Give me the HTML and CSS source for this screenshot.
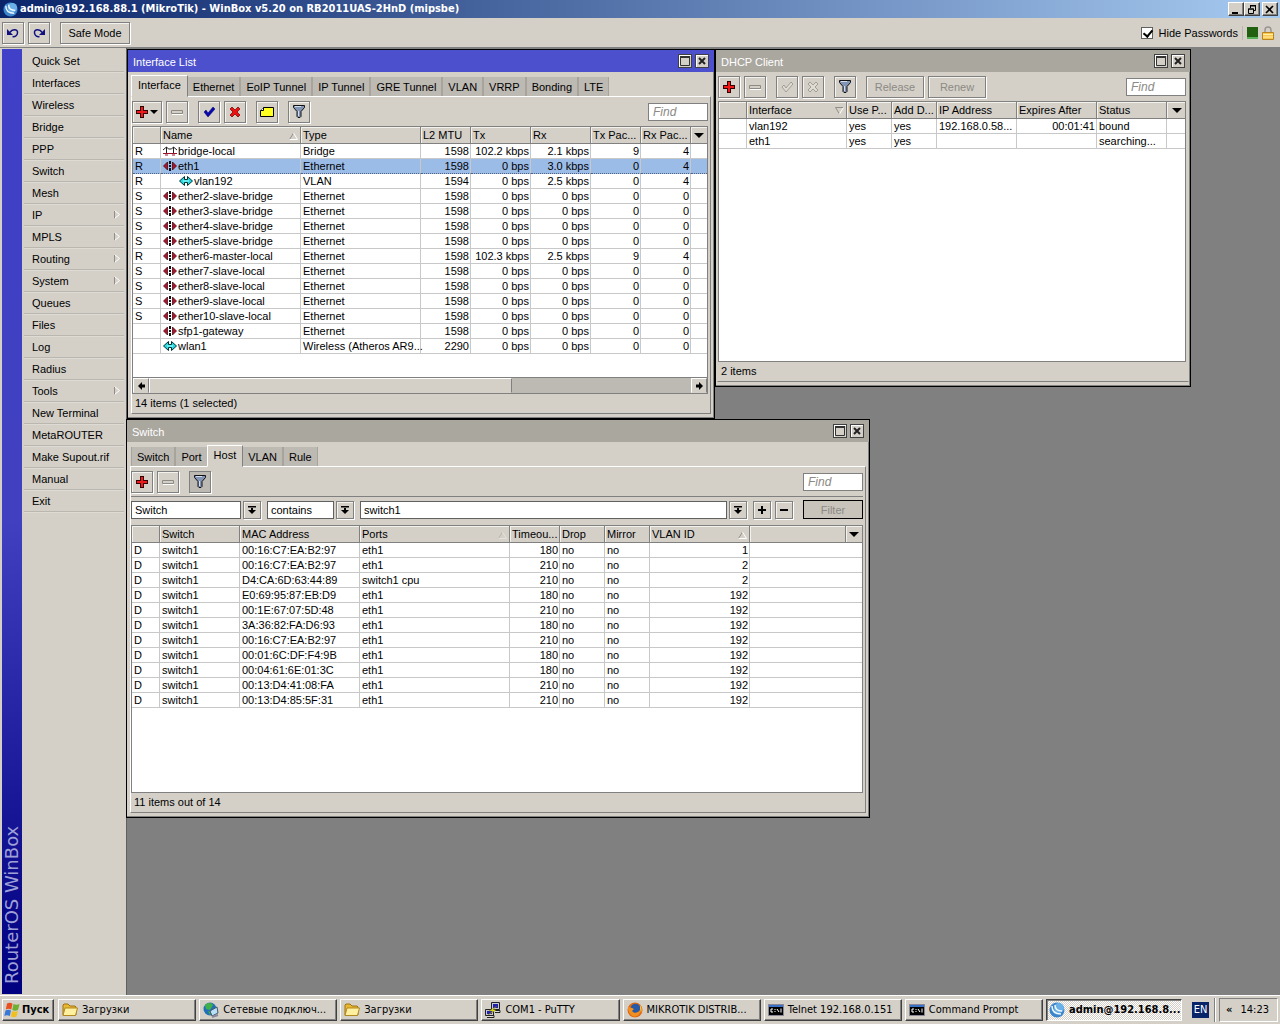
FILE: index.html
```html
<!DOCTYPE html>
<html lang="en">
<head>
  <meta charset="UTF-8">
  <meta name="viewport" content="width=device-width, initial-scale=1.0">
  <title>admin@192.168.88.1 (MikroTik) - WinBox v5.20</title>
  <link rel="stylesheet" href="styles.css">
</head>
<body>
  <svg class="sprite" width="0" height="0">
    <symbol id="plus" viewBox="0 0 12 12"><path d="M4 0h4v4h4v4H8v4H4V8H0V4h4z" fill="#300"/><path d="M5 1h2v4h4v2H7v4H5V7H1V5h4z" fill="#f01818"/></symbol>
    <symbol id="minus-off" viewBox="0 0 12 12"><path d="M.5 4.500h11v3H.5z" fill="#d4d0c8" stroke="#8c8a84"/><path d="M1 8.500h11.500" stroke="#fff"/></symbol>
    <symbol id="check" viewBox="0 0 12 12"><path d="M1 6l2-2 2 3 5-6 2 2-7 8z" fill="#0808b0" stroke="#000060" stroke-width=".5"/></symbol>
    <symbol id="cross" viewBox="0 0 12 12"><path d="M3 1l3 3 3-3 2 2-3 3 3 3-2 2-3-3-3 3-2-2 3-3-3-3z" fill="#f01010" stroke="#600" stroke-width=".7"/></symbol>
    <symbol id="check-off" viewBox="0 0 12 12"><path d="M1 6l2-2 2 3 5-6 2 2-7 8z" fill="#dedbd3" stroke="#929088" stroke-width=".8"/></symbol>
    <symbol id="cross-off" viewBox="0 0 12 12"><path d="M3 1l3 3 3-3 2 2-3 3 3 3-2 2-3-3-3 3-2-2 3-3-3-3z" fill="#dedbd3" stroke="#929088" stroke-width=".8"/></symbol>
    <symbol id="note" viewBox="0 0 14 12"><path d="M3.500 1.500h10v9H.5v-6z" fill="#ffff20" stroke="#000"/><path d="M3.500 1.500v3h-3" fill="#fff" stroke="#000"/></symbol>
    <symbol id="funnel" viewBox="0 0 12 13"><path d="M.5.5h11v2L8 6.500v5l-1 1H5l-1-1v-5L.5 2.500z" fill="#8294b4" stroke="#111"/><path d="M2 1.500h6M5.500 6v5" stroke="#d4def0"/></symbol>
    <symbol id="undo" viewBox="0 0 12 10"><path d="M3 4.500C5 1 11 .5 10.500 5c-.3 3-3 4-5 3.500" fill="none" stroke="#101080" stroke-width="1.500"/><path d="M0 1v6h6z" fill="#101080"/></symbol>
    <symbol id="redo" viewBox="0 0 12 10"><path d="M9 4.500C7 1 1 .5 1.500 5c.3 3 3 4 5 3.500" fill="none" stroke="#101080" stroke-width="1.500"/><path d="M12 1v6H6z" fill="#101080"/></symbol>
    <symbol id="eth" viewBox="0 0 14 10"><path d="M.5 5L4.500 1v8zM13.500 5l-4-4v8z" fill="#b01030" stroke="#300" stroke-width=".7"/><path d="M7 0v3M7 4v2M7 7v3" stroke="#111" stroke-width="2"/></symbol>
    <symbol id="vlan" viewBox="0 0 14 10"><path d="M.5 5L5.500.5v3h3v-3l5 4.500-5 4.500v-3h-3v3z" fill="#28d8e0" stroke="#033"/><path d="M4 5h6" stroke="#a0ffff"/></symbol>
    <symbol id="bridge" viewBox="0 0 14 10"><path d="M0 4l3.500-3 2 2h3l2-2L14 4M3.500 1v7M10.500 1v7" fill="none" stroke="#222"/><path d="M0 7.500h14M2 9h3M9 9h3" stroke="#a01028"/></symbol>
    <symbol id="up" viewBox="0 0 9 8"><path d="M4.500 1L.5 7.500" stroke="#908e88"/><path d="M4.500 1l4 6.500H.5" fill="none" stroke="#fff"/></symbol>
    <symbol id="down" viewBox="0 0 9 8"><path d="M8.500.5h-8l4 6.500" fill="none" stroke="#908e88"/><path d="M4.500 7l4-6.500" stroke="#fff"/></symbol>
    <symbol id="tri" viewBox="0 0 10 5"><path d="M0 0h10L5 5z"/></symbol>
    <symbol id="drop" viewBox="0 0 8 8"><path d="M0 0h8v1.500H0zM3 2h2v2h3L4 8 0 4h3z"/></symbol>
    <symbol id="sub" viewBox="0 0 6 9"><path d="M.5 9V.5" stroke="#908e88"/><path d="M.5.5l5 4-5 4" fill="none" stroke="#fff"/></symbol>
    <symbol id="left" viewBox="0 0 7 8"><path d="M0 4l4-4v2.500h3v3H4V8z"/></symbol>
    <symbol id="right" viewBox="0 0 7 8"><path d="M7 4L3 0v2.500H0v3h3V8z"/></symbol>
    <symbol id="max" viewBox="0 0 10 10"><path d="M.5 1h9v8.500h-9z" fill="none" stroke="#333"/><path d="M0 1h10" stroke="#333" stroke-width="2"/></symbol>
    <symbol id="close" viewBox="0 0 10 10"><path d="M2 2l6 6M8 2L2 8" stroke="#222" stroke-width="2"/></symbol>
    <symbol id="winbox" viewBox="0 0 16 16"><circle cx="8" cy="8" r="7.500" fill="#3d86cc"/><circle cx="10" cy="6" r="5" fill="#6cb0e8"/><path d="M3 4c0 5 3 8 9 8M6 3c0 4 2 6 7 6" fill="none" stroke="#eef8ff" stroke-width="1.500"/></symbol>
    <symbol id="folder" viewBox="0 0 16 16"><path d="M1 13V3l1-1h4l2 2h5l1 1v8z" fill="#e8b830" stroke="#a07010"/><path d="M1 13.500L3 6h12.500l-2 7.500z" fill="#fff0a0" stroke="#b08820"/></symbol>
    <symbol id="cmd" viewBox="0 0 16 16"><path d="M.5 2.500h15v11H.5z" fill="#000" stroke="#889"/><path d="M1 3h14v2H1z" fill="#3a6fc8"/><path d="M5 7H3v3h2M7 7v1M7 9v1M9 7l2 3M13 6.500v4" fill="none" stroke="#fff"/></symbol>
    <symbol id="fox" viewBox="0 0 16 16"><circle cx="8" cy="8" r="7.500" fill="#e06810"/><circle cx="8.500" cy="6.500" r="4.800" fill="#2858a8"/><path d="M1 5c2 0 4 1 6 2l-2 2c2 3 6 2 8-1 1 4-3 7-6 6.500S1 10 1 5z" fill="#f09020"/><path d="M13 3c2 3 2 5 1 8l-1-4z" fill="#f8c040"/></symbol>
    <symbol id="putty" viewBox="0 0 16 16"><path d="M6.500.5h8v7h-8zM.5 7.500h8v6h-8z" fill="#c8c8d0" stroke="#222"/><path d="M8 2h5v4H8zM2 9h5v3H2z" fill="#2020b0"/><path d="M2 15.500h7v-2H2M10 8.500h5v2h-5" fill="#ddd" stroke="#222"/><path d="M12 4L4 9l4 0-5 4 8-5-3-.5z" fill="#f8f020" stroke="#660" stroke-width=".4"/></symbol>
    <symbol id="net" viewBox="0 0 16 16"><circle cx="7" cy="7" r="6.500" fill="#2070b8"/><path d="M2 3c3-3 7-2 8 0L7 8 3 7zM5 9l4 1-2 3z" fill="#40b048"/><path d="M7 9l7-4 1 6-6 3z" fill="#b8e0f8" stroke="#456"/><path d="M9 15l6-2" stroke="#889" stroke-width="2"/></symbol>
    <symbol id="flag" viewBox="0 0 16 16"><path d="M3 1.500c2-1 4-.8 5.500.2L7.300 7.500c-2-1-4-1-5.500 0z" fill="#e85020"/><path d="M9.500 2c2 1 4 1 6 0L14 8c-2 1-4 1-5.700 0z" fill="#70b030"/><path d="M1.500 8.500c2-1.200 4-1 5.500 0L5.800 14c-2-1-4-1-5.500 0z" fill="#3878d8"/><path d="M8 9c2 1 4 1 5.800 0l-1.200 5.500c-2 1-4 1-5.700 0z" fill="#f0c020"/></symbol>
    <symbol id="lock" viewBox="0 0 12 14"><path d="M3 7V4c0-4 6-4 6 0v3" fill="none" stroke="#999690" stroke-width="1.500"/><path d="M.5 6.500h11v7H.5z" fill="#f8c850" stroke="#b88420"/><path d="M1 8.500h10M1 11h10" stroke="#fff0a8"/></symbol>
  </svg>

  <header class="titlebar">
    <svg width="15" height="15"><use href="#winbox"/></svg>
    <span class="title">admin@192.168.88.1 (MikroTik) - WinBox v5.20 on RB2011UAS-2HnD (mipsbe)</span>
    <button class="sys" aria-label="Minimize"><svg width="10" height="9" viewBox="0 0 10 9"><path d="M1 7h6v2H1z"/></svg></button>
    <button class="sys" aria-label="Restore"><svg width="10" height="9" viewBox="0 0 10 9"><path d="M3.500 3V1h5v4.500H7M3 .5h6M1.500 4h5v4.500h-5zM1 4h6" fill="none" stroke="#000"/></svg></button>
    <button class="sys sys-close" aria-label="Close"><svg width="10" height="9" viewBox="0 0 10 9"><path d="M1 1l7 7M8 1L1 8" stroke="#000" stroke-width="1.600"/></svg></button>
  </header>

  <div class="topbar">
    <button class="btn" aria-label="Undo"><svg width="12" height="10"><use href="#undo"/></svg></button>
    <button class="btn" aria-label="Redo"><svg width="12" height="10"><use href="#redo"/></svg></button>
    <button class="btn safe">Safe Mode</button>
    <label class="hide-pass"><input type="checkbox" checked>Hide Passwords</label>
    <span class="load"></span>
    <svg width="12" height="14"><use href="#lock"/></svg>
  </div>

  <div class="main">
    <div class="brand"><span>RouterOS WinBox</span></div>
    <nav class="menu">
      <a href="#">Quick Set</a>
      <a href="#">Interfaces</a>
      <a href="#">Wireless</a>
      <a href="#">Bridge</a>
      <a href="#">PPP</a>
      <a href="#">Switch</a>
      <a href="#">Mesh</a>
      <a href="#">IP<svg width="6" height="9"><use href="#sub"/></svg></a>
      <a href="#">MPLS<svg width="6" height="9"><use href="#sub"/></svg></a>
      <a href="#">Routing<svg width="6" height="9"><use href="#sub"/></svg></a>
      <a href="#">System<svg width="6" height="9"><use href="#sub"/></svg></a>
      <a href="#">Queues</a>
      <a href="#">Files</a>
      <a href="#">Log</a>
      <a href="#">Radius</a>
      <a href="#">Tools<svg width="6" height="9"><use href="#sub"/></svg></a>
      <a href="#">New Terminal</a>
      <a href="#">MetaROUTER</a>
      <a href="#">Make Supout.rif</a>
      <a href="#">Manual</a>
      <a href="#">Exit</a>
    </nav>

    <main class="desktop">
      <!-- Interface List -->
      <section class="window win-interfaces">
        <div class="caption active">
          <h2>Interface List</h2>
          <button class="cap" aria-label="Maximize"><svg width="10" height="10"><use href="#max"/></svg></button>
          <button class="cap" aria-label="Close"><svg width="10" height="10"><use href="#close"/></svg></button>
        </div>
        <div class="tabs">
          <button class="tab on">Interface</button><button class="tab">Ethernet</button><button class="tab">EoIP Tunnel</button><button class="tab">IP Tunnel</button><button class="tab">GRE Tunnel</button><button class="tab">VLAN</button><button class="tab">VRRP</button><button class="tab">Bonding</button><button class="tab">LTE</button>
        </div>
        <div class="panel">
          <div class="tools">
            <button class="btn wide" aria-label="Add"><svg width="12" height="12"><use href="#plus"/></svg><svg width="8" height="4"><use href="#tri"/></svg></button>
            <button class="btn" aria-label="Remove"><svg width="12" height="12"><use href="#minus-off"/></svg></button>
            <button class="btn group" aria-label="Enable"><svg width="12" height="12"><use href="#check"/></svg></button>
            <button class="btn" aria-label="Disable"><svg width="12" height="12"><use href="#cross"/></svg></button>
            <button class="btn group" aria-label="Comment"><svg width="14" height="12"><use href="#note"/></svg></button>
            <button class="btn group" aria-label="Filter"><svg width="12" height="13"><use href="#funnel"/></svg></button>
            <input class="find" type="text" placeholder="Find" aria-label="Find">
          </div>
          <div class="grid">
            <table>
              <colgroup><col class="w28"><col class="w140"><col class="w120"><col class="w50"><col class="w60"><col class="w60"><col class="w50"><col class="w50"><col></colgroup>
              <thead>
                <tr><th></th><th>Name<svg class="sort" width="9" height="8"><use href="#up"/></svg></th><th>Type</th><th>L2 MTU</th><th>Tx</th><th>Rx</th><th>Tx Pac...</th><th>Rx Pac...</th><th class="pick"><svg width="10" height="5"><use href="#tri"/></svg></th></tr>
              </thead>
              <tbody>
                <tr><td>R</td><td><svg width="14" height="10"><use href="#bridge"/></svg>bridge-local</td><td>Bridge</td><td class="n">1598</td><td class="n">102.2 kbps</td><td class="n">2.1 kbps</td><td class="n">9</td><td class="n">4</td><td></td></tr>
                <tr class="sel"><td>R</td><td><svg width="14" height="10"><use href="#eth"/></svg>eth1</td><td>Ethernet</td><td class="n">1598</td><td class="n">0 bps</td><td class="n">3.0 kbps</td><td class="n">0</td><td class="n">4</td><td></td></tr>
                <tr><td>R</td><td class="child"><svg width="14" height="10"><use href="#vlan"/></svg>vlan192</td><td>VLAN</td><td class="n">1594</td><td class="n">0 bps</td><td class="n">2.5 kbps</td><td class="n">0</td><td class="n">4</td><td></td></tr>
                <tr><td>S</td><td><svg width="14" height="10"><use href="#eth"/></svg>ether2-slave-bridge</td><td>Ethernet</td><td class="n">1598</td><td class="n">0 bps</td><td class="n">0 bps</td><td class="n">0</td><td class="n">0</td><td></td></tr>
                <tr><td>S</td><td><svg width="14" height="10"><use href="#eth"/></svg>ether3-slave-bridge</td><td>Ethernet</td><td class="n">1598</td><td class="n">0 bps</td><td class="n">0 bps</td><td class="n">0</td><td class="n">0</td><td></td></tr>
                <tr><td>S</td><td><svg width="14" height="10"><use href="#eth"/></svg>ether4-slave-bridge</td><td>Ethernet</td><td class="n">1598</td><td class="n">0 bps</td><td class="n">0 bps</td><td class="n">0</td><td class="n">0</td><td></td></tr>
                <tr><td>S</td><td><svg width="14" height="10"><use href="#eth"/></svg>ether5-slave-bridge</td><td>Ethernet</td><td class="n">1598</td><td class="n">0 bps</td><td class="n">0 bps</td><td class="n">0</td><td class="n">0</td><td></td></tr>
                <tr><td>R</td><td><svg width="14" height="10"><use href="#eth"/></svg>ether6-master-local</td><td>Ethernet</td><td class="n">1598</td><td class="n">102.3 kbps</td><td class="n">2.5 kbps</td><td class="n">9</td><td class="n">4</td><td></td></tr>
                <tr><td>S</td><td><svg width="14" height="10"><use href="#eth"/></svg>ether7-slave-local</td><td>Ethernet</td><td class="n">1598</td><td class="n">0 bps</td><td class="n">0 bps</td><td class="n">0</td><td class="n">0</td><td></td></tr>
                <tr><td>S</td><td><svg width="14" height="10"><use href="#eth"/></svg>ether8-slave-local</td><td>Ethernet</td><td class="n">1598</td><td class="n">0 bps</td><td class="n">0 bps</td><td class="n">0</td><td class="n">0</td><td></td></tr>
                <tr><td>S</td><td><svg width="14" height="10"><use href="#eth"/></svg>ether9-slave-local</td><td>Ethernet</td><td class="n">1598</td><td class="n">0 bps</td><td class="n">0 bps</td><td class="n">0</td><td class="n">0</td><td></td></tr>
                <tr><td>S</td><td><svg width="14" height="10"><use href="#eth"/></svg>ether10-slave-local</td><td>Ethernet</td><td class="n">1598</td><td class="n">0 bps</td><td class="n">0 bps</td><td class="n">0</td><td class="n">0</td><td></td></tr>
                <tr><td></td><td><svg width="14" height="10"><use href="#eth"/></svg>sfp1-gateway</td><td>Ethernet</td><td class="n">1598</td><td class="n">0 bps</td><td class="n">0 bps</td><td class="n">0</td><td class="n">0</td><td></td></tr>
                <tr><td></td><td><svg width="14" height="10"><use href="#vlan"/></svg>wlan1</td><td>Wireless (Atheros AR9...</td><td class="n">2290</td><td class="n">0 bps</td><td class="n">0 bps</td><td class="n">0</td><td class="n">0</td><td></td></tr>
              </tbody>
            </table>
            <div class="scroll">
              <button class="arrow" aria-label="Scroll left"><svg width="7" height="8"><use href="#left"/></svg></button>
              <div class="track"><div class="thumb"></div></div>
              <button class="arrow" aria-label="Scroll right"><svg width="7" height="8"><use href="#right"/></svg></button>
            </div>
          </div>
          <div class="status">14 items (1 selected)</div>
        </div>
      </section>

      <!-- DHCP Client -->
      <section class="window win-dhcp">
        <div class="caption">
          <h2>DHCP Client</h2>
          <button class="cap" aria-label="Maximize"><svg width="10" height="10"><use href="#max"/></svg></button>
          <button class="cap" aria-label="Close"><svg width="10" height="10"><use href="#close"/></svg></button>
        </div>
        <div class="panel plain">
          <div class="tools">
            <button class="btn" aria-label="Add"><svg width="12" height="12"><use href="#plus"/></svg></button>
            <button class="btn" aria-label="Remove"><svg width="12" height="12"><use href="#minus-off"/></svg></button>
            <button class="btn group" aria-label="Enable"><svg width="12" height="12"><use href="#check-off"/></svg></button>
            <button class="btn" aria-label="Disable"><svg width="12" height="12"><use href="#cross-off"/></svg></button>
            <button class="btn group" aria-label="Filter"><svg width="12" height="13"><use href="#funnel"/></svg></button>
            <button class="btn group action" disabled>Release</button>
            <button class="btn action" disabled>Renew</button>
            <input class="find" type="text" placeholder="Find" aria-label="Find">
          </div>
          <div class="grid">
            <table>
              <colgroup><col class="w28"><col class="w100"><col class="w45"><col class="w45"><col class="w80"><col class="w80"><col class="w70"><col></colgroup>
              <thead>
                <tr><th></th><th>Interface<svg class="sort" width="9" height="8"><use href="#down"/></svg></th><th>Use P...</th><th>Add D...</th><th>IP Address</th><th>Expires After</th><th>Status</th><th class="pick"><svg width="10" height="5"><use href="#tri"/></svg></th></tr>
              </thead>
              <tbody>
                <tr><td></td><td>vlan192</td><td>yes</td><td>yes</td><td>192.168.0.58...</td><td class="n">00:01:41</td><td>bound</td><td></td></tr>
                <tr><td></td><td>eth1</td><td>yes</td><td>yes</td><td></td><td></td><td>searching...</td><td></td></tr>
              </tbody>
            </table>
          </div>
          <div class="status">2 items</div>
        </div>
      </section>

      <!-- Switch -->
      <section class="window win-switch">
        <div class="caption">
          <h2>Switch</h2>
          <button class="cap" aria-label="Maximize"><svg width="10" height="10"><use href="#max"/></svg></button>
          <button class="cap" aria-label="Close"><svg width="10" height="10"><use href="#close"/></svg></button>
        </div>
        <div class="tabs">
          <button class="tab">Switch</button><button class="tab">Port</button><button class="tab on">Host</button><button class="tab">VLAN</button><button class="tab">Rule</button>
        </div>
        <div class="panel">
          <div class="tools">
            <button class="btn" aria-label="Add"><svg width="12" height="12"><use href="#plus"/></svg></button>
            <button class="btn" aria-label="Remove"><svg width="12" height="12"><use href="#minus-off"/></svg></button>
            <button class="btn group pressed" aria-label="Filter"><svg width="12" height="13"><use href="#funnel"/></svg></button>
            <input class="find" type="text" placeholder="Find" aria-label="Find">
          </div>
          <div class="query">
            <div class="combo field"><select aria-label="Field"><option>Switch</option></select><button class="btn small" aria-label="Open fields"><svg width="8" height="8"><use href="#drop"/></svg></button></div>
            <div class="combo match"><select aria-label="Condition"><option>contains</option></select><button class="btn small" aria-label="Open conditions"><svg width="8" height="8"><use href="#drop"/></svg></button></div>
            <div class="combo value"><select aria-label="Value"><option>switch1</option></select><button class="btn small" aria-label="Open values"><svg width="8" height="8"><use href="#drop"/></svg></button></div>
            <button class="btn small" aria-label="Add condition"><svg width="8" height="8" viewBox="0 0 8 8"><path d="M3 0h2v3h3v2H5v3H3V5H0V3h3z"/></svg></button>
            <button class="btn small" aria-label="Remove condition"><svg width="8" height="8" viewBox="0 0 8 8"><path d="M0 3h8v2H0z"/></svg></button>
            <button class="apply" disabled>Filter</button>
          </div>
          <div class="grid">
            <table>
              <colgroup><col class="w28"><col class="w80"><col class="w120"><col class="w150"><col class="w50"><col class="w45"><col class="w45"><col class="w100"><col><col class="w16"></colgroup>
              <thead>
                <tr><th></th><th>Switch</th><th>MAC Address</th><th>Ports<svg class="sort faint" width="9" height="8"><use href="#up"/></svg></th><th>Timeou...</th><th>Drop</th><th>Mirror</th><th>VLAN ID<svg class="sort" width="9" height="8"><use href="#up"/></svg></th><th></th><th class="pick"><svg width="10" height="5"><use href="#tri"/></svg></th></tr>
              </thead>
              <tbody>
                <tr><td>D</td><td>switch1</td><td>00:16:C7:EA:B2:97</td><td>eth1</td><td class="n">180</td><td>no</td><td>no</td><td class="n">1</td><td colspan="2"></td></tr>
                <tr><td>D</td><td>switch1</td><td>00:16:C7:EA:B2:97</td><td>eth1</td><td class="n">210</td><td>no</td><td>no</td><td class="n">2</td><td colspan="2"></td></tr>
                <tr><td>D</td><td>switch1</td><td>D4:CA:6D:63:44:89</td><td>switch1 cpu</td><td class="n">210</td><td>no</td><td>no</td><td class="n">2</td><td colspan="2"></td></tr>
                <tr><td>D</td><td>switch1</td><td>E0:69:95:87:EB:D9</td><td>eth1</td><td class="n">180</td><td>no</td><td>no</td><td class="n">192</td><td colspan="2"></td></tr>
                <tr><td>D</td><td>switch1</td><td>00:1E:67:07:5D:48</td><td>eth1</td><td class="n">210</td><td>no</td><td>no</td><td class="n">192</td><td colspan="2"></td></tr>
                <tr><td>D</td><td>switch1</td><td>3A:36:82:FA:D6:93</td><td>eth1</td><td class="n">180</td><td>no</td><td>no</td><td class="n">192</td><td colspan="2"></td></tr>
                <tr><td>D</td><td>switch1</td><td>00:16:C7:EA:B2:97</td><td>eth1</td><td class="n">210</td><td>no</td><td>no</td><td class="n">192</td><td colspan="2"></td></tr>
                <tr><td>D</td><td>switch1</td><td>00:01:6C:DF:F4:9B</td><td>eth1</td><td class="n">180</td><td>no</td><td>no</td><td class="n">192</td><td colspan="2"></td></tr>
                <tr><td>D</td><td>switch1</td><td>00:04:61:6E:01:3C</td><td>eth1</td><td class="n">180</td><td>no</td><td>no</td><td class="n">192</td><td colspan="2"></td></tr>
                <tr><td>D</td><td>switch1</td><td>00:13:D4:41:08:FA</td><td>eth1</td><td class="n">210</td><td>no</td><td>no</td><td class="n">192</td><td colspan="2"></td></tr>
                <tr><td>D</td><td>switch1</td><td>00:13:D4:85:5F:31</td><td>eth1</td><td class="n">210</td><td>no</td><td>no</td><td class="n">192</td><td colspan="2"></td></tr>
              </tbody>
            </table>
          </div>
          <div class="status">11 items out of 14</div>
        </div>
      </section>
    </main>
  </div>

  <footer class="taskbar">
    <button class="start"><svg width="16" height="16"><use href="#flag"/></svg>Пуск</button>
    <div class="tasks">
      <button class="task"><svg width="16" height="16"><use href="#folder"/></svg>Загрузки</button>
      <button class="task"><svg width="16" height="16"><use href="#net"/></svg>Сетевые подключ...</button>
      <button class="task"><svg width="16" height="16"><use href="#folder"/></svg>Загрузки</button>
      <button class="task"><svg width="16" height="16"><use href="#putty"/></svg>COM1 - PuTTY</button>
      <button class="task"><svg width="16" height="16"><use href="#fox"/></svg>MIKROTIK DISTRIB...</button>
      <button class="task"><svg width="16" height="16"><use href="#cmd"/></svg>Telnet 192.168.0.151</button>
      <button class="task"><svg width="16" height="16"><use href="#cmd"/></svg>Command Prompt</button>
      <button class="task current"><svg width="16" height="16"><use href="#winbox"/></svg>admin@192.168.8...</button>
    </div>
    <span class="lang">EN</span>
    <div class="tray"><b>«</b><span>14:23</span></div>
  </footer>
</body>
</html>
```
FILE: styles.css
```css
* {
  box-sizing: border-box;
}

body {
  margin: 0;
  height: 100vh;
  display: flex;
  flex-direction: column;
  overflow: hidden;
  background: #d4d0c8;
  color: #000;
  font: 11px/14px "Liberation Sans", Arial, sans-serif;
}

button, input, select {
  font: inherit;
  color: inherit;
  margin: 0;
  padding: 0;
}

svg {
  flex: none;
}

.sprite {
  position: absolute;
}

/* main window title */
.titlebar {
  display: flex;
  align-items: center;
  height: 18px;
  padding: 0 2px 0 3px;
  background: linear-gradient(to right, #0a246a, #a6caf0);
  color: #fff;
  font: bold 11px/14px "DejaVu Sans Condensed", "DejaVu Sans", sans-serif;
}

.title {
  flex: 1;
  padding-left: 2px;
  white-space: nowrap;
}

.sys {
  display: flex;
  align-items: center;
  justify-content: center;
  width: 16px;
  height: 14px;
  background: #d4d0c8;
  border: 1px solid;
  border-color: #fff #404040 #404040 #fff;
  box-shadow: inset -1px -1px #808080;
}

.sys-close {
  margin-left: 2px;
}

.topbar {
  display: flex;
  align-items: center;
  gap: 4px;
  height: 30px;
  padding: 0 6px 0 2px;
  border-bottom: 1px solid #808080;
}

.btn {
  display: flex;
  align-items: center;
  justify-content: center;
  flex: none;
  gap: 2px;
  width: 22px;
  height: 22px;
  background: #d4d0c8;
  border: 1px solid #808080;
  box-shadow: inset 1px 1px #f4f2ec, 1px 1px #fff;
}

.btn.wide {
  width: 30px;
}

.btn.group {
  margin-left: 6px;
}

.btn.safe {
  width: 70px;
  margin-left: 6px;
}

.btn.action {
  width: 58px;
}

.btn.small {
  width: 18px;
  height: 18px;
}

.btn.pressed {
  background: #bdb9b3;
  box-shadow: 1px 1px #fff;
}

.btn:disabled {
  color: #8c8a84;
}

.hide-pass {
  display: flex;
  align-items: center;
  gap: 6px;
  margin-left: auto;
  padding-right: 4px;
  border-right: 1px solid #bcb8b0;
}

.hide-pass input {
  appearance: none;
  width: 12px;
  height: 12px;
  background: #fff;
  border: 1px solid #606060;
}

.hide-pass input:checked::before {
  content: "";
  display: block;
  width: 4px;
  height: 7px;
  margin: 0 3px;
  border: solid #000;
  border-width: 0 2px 2px 0;
  transform: rotate(40deg);
}

.load {
  width: 11px;
  height: 12px;
  background: #206010;
  border-bottom: 2px solid #58b058;
}

/* left menu */
.main {
  display: flex;
  flex: 1;
  min-height: 0;
}

.brand {
  display: flex;
  width: 20px;
  margin: 1px 0 1px 2px;
  background: linear-gradient(to bottom, #4040c8, #4040c0 50%, #101090 85%, #000080);
  color: #a0a0d8;
  font: 18px/20px "DejaVu Sans", sans-serif;
}

.brand span {
  writing-mode: vertical-rl;
  transform: rotate(180deg);
  padding-top: 10px;
}

.menu {
  width: 104px;
  padding: 2px 2px 0;
}

.menu a {
  display: flex;
  align-items: center;
  justify-content: space-between;
  height: 22px;
  padding: 0 4px 0 8px;
  border-bottom: 1px solid #bab7b0;
  box-shadow: 0 1px #dedbd4;
  color: #000;
  text-decoration: none;
}

.desktop {
  position: relative;
  flex: 1;
  background: #808080;
  border-left: 1px solid #606060;
}

/* child windows */
.window {
  position: absolute;
  display: flex;
  flex-direction: column;
  background: #d4d0c8;
  border: 1px solid #000;
  box-shadow: inset -1px -1px #808080;
}

.win-interfaces {
  left: 0;
  top: 1px;
  width: 588px;
  height: 370px;
}

.win-dhcp {
  left: 588px;
  top: 1px;
  width: 476px;
  height: 338px;
}

.win-switch {
  left: -1px;
  top: 371px;
  width: 744px;
  height: 399px;
}

.caption {
  display: flex;
  align-items: center;
  gap: 3px;
  height: 22px;
  padding: 0 5px;
  background: #aaa79f;
  color: #fff;
}

.caption.active {
  background: #4c50cc;
}

.caption h2 {
  flex: 1;
  margin: 0;
  padding-top: 2px;
  font-size: 11px;
  font-weight: normal;
}

.cap {
  display: flex;
  align-items: center;
  justify-content: center;
  width: 14px;
  height: 14px;
  background: #d4d0c8;
  border: 1px solid #404040;
  box-shadow: inset 1px 1px #fff;
}

.tabs {
  display: flex;
  align-items: flex-end;
  height: 24px;
  padding-left: 4px;
}

.tab {
  height: 19px;
  padding: 0 5px;
  background: #bdb9b3;
  border: solid;
  border-width: 0 1px 0 1px;
  border-color: #e4e1da #a8a49c;
}

.tab.on {
  height: 22px;
  margin: 0 -1px -1px;
  padding: 0 6px 3px;
  background: #d4d0c8;
  border-width: 1px;
  border-color: #fff #808080 #d4d0c8 #fff;
  z-index: 1;
}

.panel {
  display: flex;
  flex: 1;
  flex-direction: column;
  min-height: 0;
  margin: 0 3px 4px;
  padding-right: 2px;
  border: 1px solid;
  border-color: #fff #808080 #808080 #fff;
}

.panel.plain {
  margin: 0 1px 4px;
  border-color: #d4d0c8 #d4d0c8 #808080;
  border-top: none;
}

.tools {
  display: flex;
  align-items: center;
  gap: 4px;
  height: 29px;
  flex: none;
}

.find {
  width: 60px;
  height: 18px;
  margin-left: auto;
  padding: 0 4px;
  border: 1px solid #808080;
  background: #fff;
  font-size: 12px;
}

.find::placeholder {
  color: #8c8a84;
  font-style: italic;
}

.query {
  display: flex;
  align-items: center;
  gap: 4px;
  height: 26px;
  margin-bottom: 3px;
  border-top: 1px solid #808080;
}

.combo {
  display: flex;
  gap: 2px;
  margin-right: 2px;
}

.combo select {
  appearance: none;
  flex: 1;
  min-width: 0;
  height: 18px;
  padding: 0 3px;
  background: #fff;
  border: 1px solid #606060;
  border-radius: 0;
}

.combo.field {
  width: 130px;
}

.combo.match {
  width: 87px;
}

.combo.value {
  flex: 1;
}

.apply {
  width: 60px;
  height: 19px;
  margin-left: 6px;
  background: #c8c4bc;
  border: 1px solid #000;
}

.apply:disabled {
  color: #8c8a84;
}

/* lists */
.grid {
  display: flex;
  flex: 1;
  flex-direction: column;
  min-height: 0;
  background: #fff;
  border: 1px solid #808080;
}

table {
  width: 100%;
  table-layout: fixed;
  border-collapse: separate;
  border-spacing: 0;
}

th {
  position: relative;
  height: 17px;
  padding: 0 2px;
  background: #d4d0c8;
  border-right: 1px solid #808080;
  border-bottom: 1px solid #808080;
  box-shadow: inset 1px 1px #f4f2ec;
  font-weight: normal;
  text-align: left;
  white-space: nowrap;
}

td {
  height: 15px;
  padding: 0 2px;
  border-right: 1px solid #c8c8c8;
  border-bottom: 1px solid #c8c8c8;
  line-height: 14px;
  white-space: nowrap;
}

th:last-child, td:last-child {
  border-right: none;
}

td svg {
  margin-right: 1px;
  vertical-align: -1px;
}

td.child {
  padding-left: 18px;
}

td.n {
  padding: 0 1px;
  text-align: right;
}

.sel td {
  background: #9cbce8;
  border-bottom: 1px dotted #506080;
}

.sort {
  position: absolute;
  right: 2px;
  top: 5px;
}

.faint {
  opacity: 0.4;
}

th.pick {
  padding: 0 3px 0 0;
  text-align: right;
}

.pick svg {
  vertical-align: 1px;
}

.w16 { width: 16px; }
.w28 { width: 28px; }
.w45 { width: 45px; }
.w50 { width: 50px; }
.w60 { width: 60px; }
.w70 { width: 70px; }
.w80 { width: 80px; }
.w100 { width: 100px; }
.w120 { width: 120px; }
.w140 { width: 140px; }
.w150 { width: 150px; }

.scroll {
  display: flex;
  height: 16px;
  margin-top: auto;
  border-top: 1px solid #808080;
  background: #bdb9b3;
}

.arrow {
  display: flex;
  align-items: center;
  justify-content: center;
  width: 16px;
  background: #d4d0c8;
  border: 1px solid;
  border-color: #fff #808080 #d4d0c8 #fff;
}

.track {
  flex: 1;
}

.thumb {
  width: 67%;
  height: 100%;
  background: #d4d0c8;
  border: 1px solid;
  border-color: #fff #808080 #d4d0c8 #fff;
}

.status {
  height: 19px;
  padding: 0 3px;
  line-height: 19px;
}

/* windows taskbar */
.taskbar {
  display: flex;
  align-items: center;
  height: 29px;
  padding: 0 2px;
  border-top: 1px solid #fff;
  font: 11px/14px "DejaVu Sans Condensed", "DejaVu Sans", sans-serif;
}

.start, .task {
  display: flex;
  align-items: center;
  gap: 4px;
  height: 22px;
  padding: 0 3px;
  background: #d4d0c8;
  border: 1px solid;
  border-color: #fff #404040 #404040 #fff;
  box-shadow: inset -1px -1px #808080;
  white-space: nowrap;
  overflow: hidden;
}

.start {
  width: 52px;
  padding: 0 1px;
  gap: 2px;
  font-weight: bold;
}

.tasks {
  display: flex;
  flex: 1;
  gap: 3px;
  margin: 0 10px 0 4px;
}

.task {
  flex: 1;
  min-width: 0;
}

.task.current {
  padding: 0 2px;
  background: repeating-conic-gradient(#fff 0 25%, #d4d0c8 0 50%) 0 0 / 2px 2px;
  border-color: #404040 #fff #fff #404040;
  box-shadow: inset 1px 1px #808080;
  font-weight: bold;
}

.lang {
  width: 17px;
  height: 16px;
  margin-right: 10px;
  background: #0a246a;
  color: #fff;
  line-height: 16px;
  text-align: center;
}

.tray {
  display: flex;
  align-items: center;
  gap: 8px;
  height: 24px;
  padding: 0 8px 0 6px;
  border: 1px solid;
  border-color: #808080 #fff #fff #808080;
  box-shadow: -3px 0 #d4d0c8, -4px 0 #fff, -5px 0 #808080;
}
```
